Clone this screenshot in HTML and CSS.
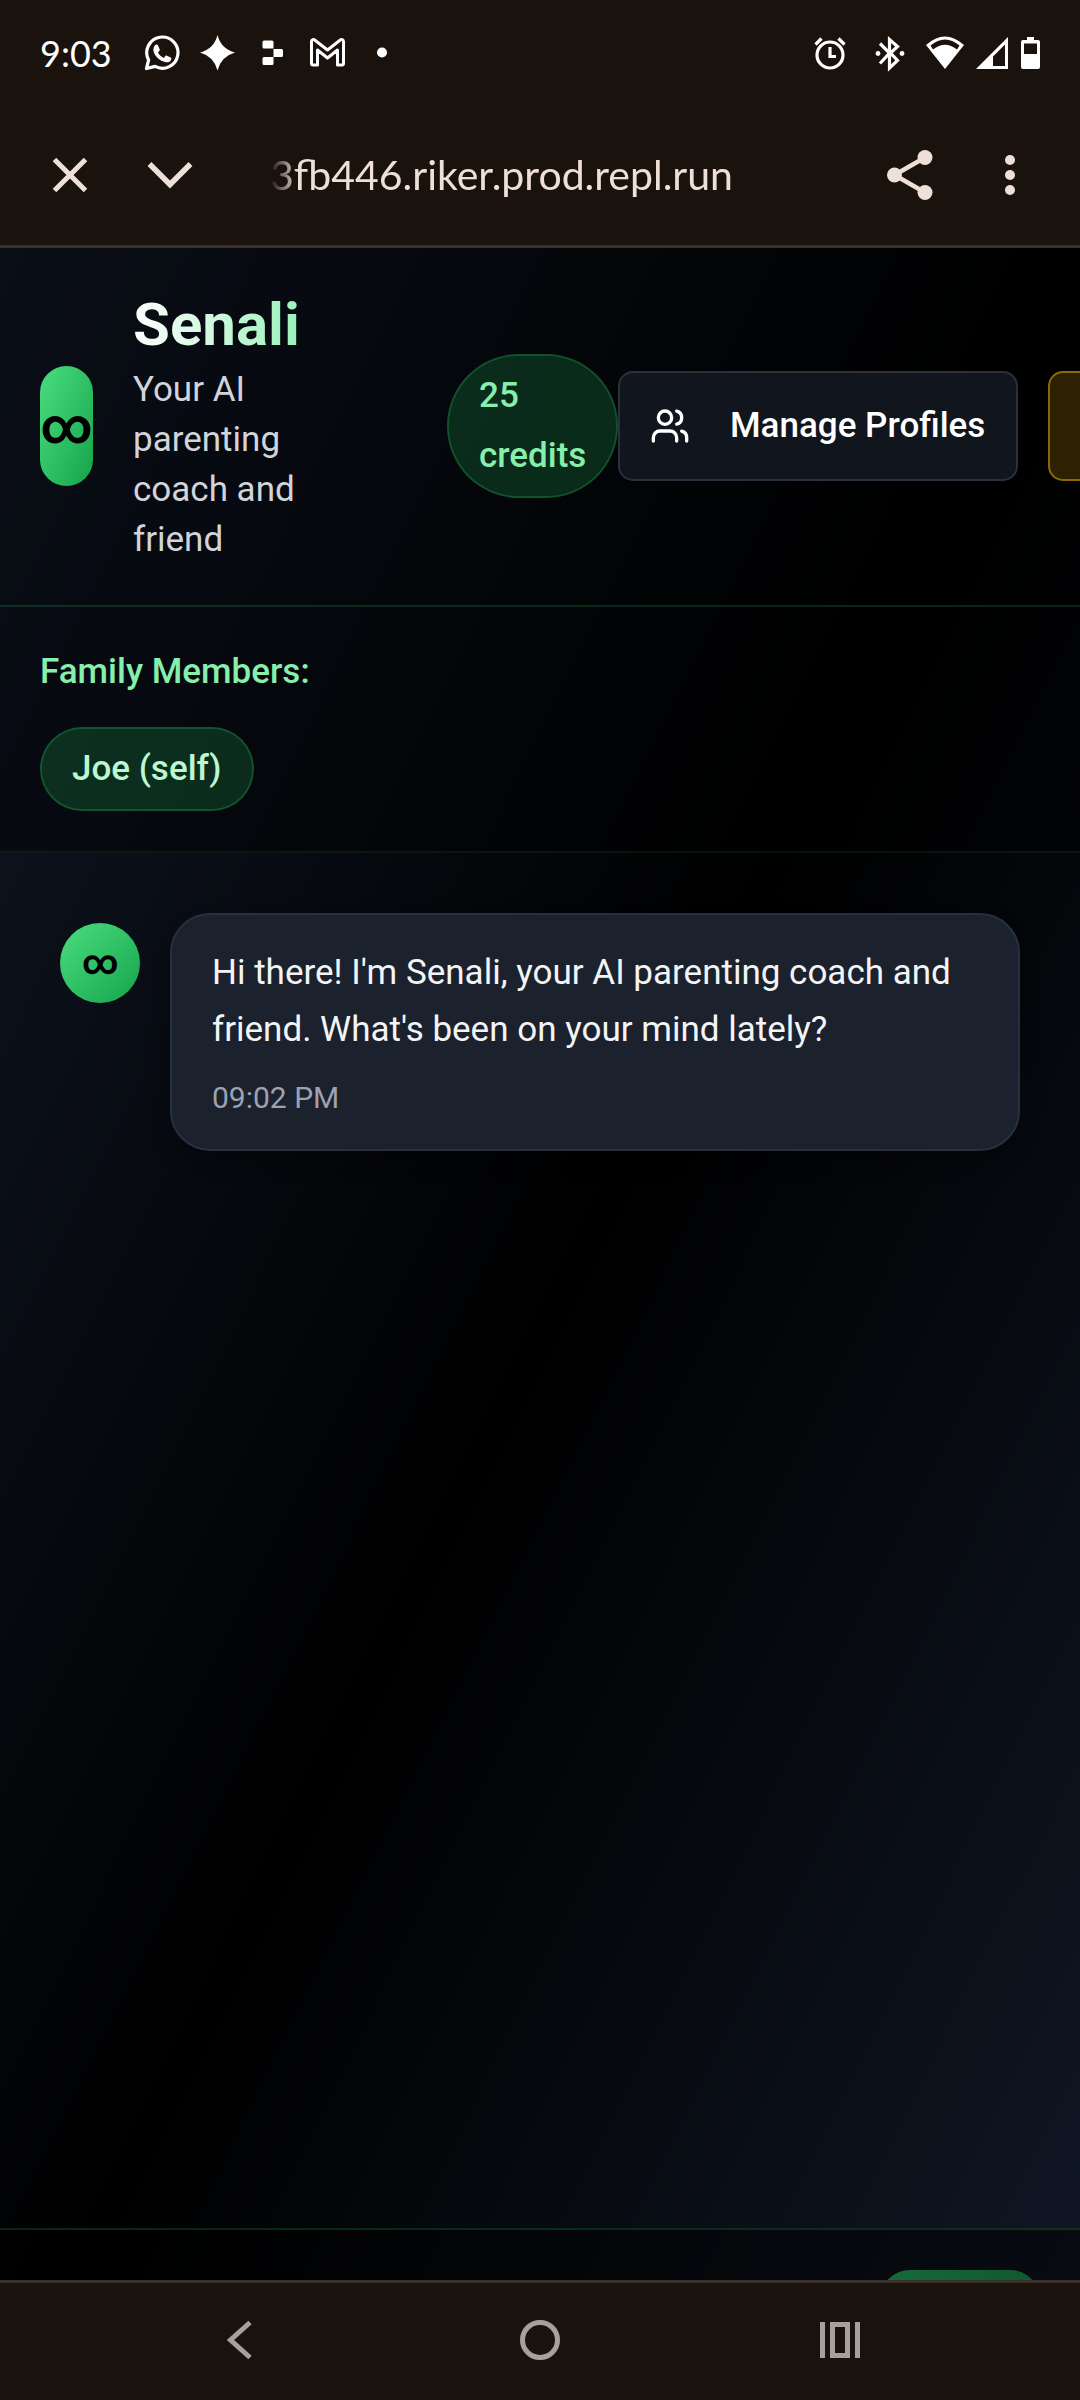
FILE: index.html
```html
<!DOCTYPE html>
<html lang="en">
<head>
<meta charset="utf-8">
<meta name="viewport" content="width=device-width, initial-scale=1">
<title>Senali</title>
<link rel="stylesheet" href="styles.css">
</head>
<body>
<div class="screen">
  <div class="status-bar">
    <div class="status-left">
      <span class="clock">9:03</span>
      <div class="notifications">
        <svg class="icon-36" viewBox="0 0 36 36" aria-hidden="true">
          <path d="M2.500 33.500 4.600 25A15.600 15.600 0 1 1 11 31.400Z" fill="none" stroke="#fff" stroke-width="3.200" stroke-linejoin="round"/>
          <path d="M11.600 9.800c.6-.5 1.800-.5 2.200.3l1.900 4.200c.2.600 0 1.200-.4 1.700l-1.300 1.600c1.300 2.400 3.200 4.200 5.800 5.300l1.600-1.900c.4-.5.9-.6 1.500-.3l3.800 1.900c.7.4.7 1 .5 1.800-.7 2.400-3.200 3.300-5.400 2.800-6.400-1.400-10.600-5.500-12.200-10.700-.7-2.600.2-5.200 2-6.700Z" fill="#fff"/>
        </svg>
        <svg class="icon-36" viewBox="0 0 36 36" aria-hidden="true">
          <path d="M18.500 0Q22 14 36 17.500 22 21.500 18.500 35.500 15 21.500 1 17.500 15 14 18.500 0Z" fill="#fff"/>
        </svg>
        <svg class="icon-36" viewBox="0 0 36 36" aria-hidden="true">
          <path d="M10 5.500h8a1.500 1.500 0 0 1 1.500 1.500v6.500H10A1.500 1.500 0 0 1 8.500 12V7A1.500 1.500 0 0 1 10 5.500ZM19.500 14H27.500A1.500 1.500 0 0 1 29 15.500v5a1.500 1.500 0 0 1-1.500 1.500h-8ZM10 22h9.500v6.500A1.500 1.500 0 0 1 18 30h-8a1.500 1.500 0 0 1-1.500-1.500v-5A1.500 1.500 0 0 1 10 22Z" fill="#fff"/>
        </svg>
        <svg class="icon-36" viewBox="0 0 36 36" aria-hidden="true">
          <path d="M2.500 28.500V6.500C2.500 4.500 4.600 4 6 5.200L18.500 15 31 5.200C32.400 4 34.500 4.500 34.500 6.500V28.500Q34.500 30 33 30H28.500V15L18.500 23 8.500 15V30H4Q2.500 30 2.500 28.500Z" fill="none" stroke="#fff" stroke-width="3" stroke-linejoin="round"/>
        </svg>
        <svg class="icon-36" viewBox="0 0 36 36" aria-hidden="true"><circle cx="18" cy="17.500" r="5" fill="#fff"/></svg>
      </div>
    </div>
    <div class="status-right">
      <div class="indicators">
        <svg class="icon-40" viewBox="0 0 40 40" aria-hidden="true">
          <circle cx="20" cy="22" r="13" fill="none" stroke="#fff" stroke-width="3.200"/>
          <path d="M20 14v9.500h6M5.500 11.500l6-6M28.500 5.500l6 6" fill="none" stroke="#fff" stroke-width="3.200"/>
        </svg>
        <svg class="icon-40" viewBox="0 0 40 40" aria-hidden="true">
          <path d="M10 10.500 19.500 20 10 30.500M19.500 20V6.500L27.500 13.500 20.500 20 27.500 27.500 19.500 35V20" fill="none" stroke="#fff" stroke-width="3.200"/>
          <circle cx="8" cy="20.500" r="2.400" fill="#fff"/><circle cx="32" cy="20.500" r="2.400" fill="#fff"/>
        </svg>
      </div>
      <div class="levels">
        <svg class="icon-wifi" viewBox="0 0 38 34" aria-hidden="true">
          <path d="M0 9Q19-8 38 9L19 33Z" fill="#fff"/>
          <path d="M4.500 9.500Q19-2.500 33.500 9.500L31 13.500Q19 4 7 13.500Z" fill="#1a120d"/>
        </svg>
        <svg class="icon-signal" viewBox="0 0 32 34" aria-hidden="true">
          <path fill-rule="evenodd" d="M32 1V33H0ZM29 8.500 17 20.500V30H29Z" fill="#fff"/>
        </svg>
        <svg class="icon-battery" viewBox="0 0 20 34" aria-hidden="true">
          <path fill-rule="evenodd" d="M7 1h7v3h4q2 0 2 2v25q0 2-2 2H3q-2 0-2-2V6q0-2 2-2h4ZM4 7.500V18H17V7.500Z" fill="#fff"/>
        </svg>
      </div>
    </div>
  </div>

  <div class="toolbar">
    <button class="tool" type="button" aria-label="Close tab">
      <svg class="icon-50" viewBox="0 0 50 50"><path d="M9.500 9.500l31 31M40.500 9.500l-31 31" fill="none" stroke="#eee0d6" stroke-width="5"/></svg>
    </button>
    <button class="tool" type="button" aria-label="Minimize">
      <svg class="icon-50" viewBox="0 0 50 50"><path d="M4.500 14 25 34.500 45.500 14" fill="none" stroke="#eee0d6" stroke-width="5.500"/></svg>
    </button>
    <div class="address">3fb446.riker.prod.repl.run</div>
    <button class="tool" type="button" aria-label="Share">
      <svg class="icon-50" viewBox="0 0 50 50"><path d="M40 7.500 9.500 25 40 42.500" fill="none" stroke="#eee0d6" stroke-width="4.500"/><g fill="#eee0d6"><circle cx="40" cy="7.500" r="7.500"/><circle cx="9.500" cy="25" r="7.500"/><circle cx="40" cy="42.500" r="7.500"/></g></svg>
    </button>
    <button class="tool" type="button" aria-label="More options">
      <svg class="icon-50" viewBox="0 0 50 50"><g fill="#eee0d6"><circle cx="25" cy="10" r="5"/><circle cx="25" cy="25" r="5"/><circle cx="25" cy="40" r="5"/></g></svg>
    </button>
  </div>

  <div class="viewport">
    <div class="app">
      <header class="app-header">
        <div class="brand">
          <div class="logo">∞</div>
          <div class="brand-text">
            <h1 class="brand-name">Senali</h1>
            <p class="tagline">Your AI parenting coach and friend</p>
          </div>
        </div>
        <div class="actions">
          <div class="credits">25 credits</div>
          <button class="profiles" type="button">
            <svg class="icon-40" viewBox="0 0 24 24" fill="none" stroke="currentColor" stroke-width="2" stroke-linecap="round" stroke-linejoin="round" aria-hidden="true">
              <path d="M16 21v-2a4 4 0 0 0-4-4H6a4 4 0 0 0-4 4v2"/><circle cx="9" cy="7" r="4"/><path d="M22 21v-2a4 4 0 0 0-3-3.870"/><path d="M16 3.130a4 4 0 0 1 0 7.750"/>
            </svg>
            Manage Profiles
          </button>
          <button class="upgrade" type="button" aria-label="Upgrade"></button>
        </div>
      </header>

      <section class="family">
        <h2 class="family-title">Family Members:</h2>
        <div class="chips"><span class="chip">Joe (self)</span></div>
      </section>

      <main class="messages">
        <article class="message">
          <div class="avatar">∞</div>
          <div class="bubble">
            <p class="bubble-text">Hi there! I'm Senali, your AI parenting coach and friend. What's been on your mind lately?</p>
            <time class="bubble-time">09:02 PM</time>
          </div>
        </article>
      </main>

      <footer class="composer">
        <button class="send" type="button" aria-label="Send"></button>
      </footer>
    </div>
  </div>

  <nav class="system-nav" aria-label="System">
    <button class="nav-button" type="button" aria-label="Back">
      <svg class="icon-40" viewBox="0 0 40 40"><path d="M30 2.500 10.500 20 30 37.500" fill="none" stroke="#a6a19e" stroke-width="5"/></svg>
    </button>
    <button class="nav-button" type="button" aria-label="Home">
      <svg class="icon-40" viewBox="0 0 40 40"><circle cx="20" cy="20" r="17.500" fill="none" stroke="#a6a19e" stroke-width="5"/></svg>
    </button>
    <button class="nav-button" type="button" aria-label="Recents">
      <svg class="icon-40" viewBox="0 0 40 40"><path d="M2.500 2v36M37.500 2v36M12.500 4.500h15v31h-15Z" fill="none" stroke="#a6a19e" stroke-width="5"/></svg>
    </button>
  </nav>
</div>
</body>
</html>
```
FILE: styles.css
```css
* { box-sizing: border-box; }

body {
  margin: 0;
  background: #1a120d;
  color: #fff;
  font-family: Roboto, "Liberation Sans", sans-serif;
  font-size: 35px;
  line-height: 50px;
}

h1, h2, p { margin: 0; }

button {
  margin: 0;
  padding: 0;
  border: 0;
  background: none;
  color: inherit;
  font: inherit;
}

svg { display: block; flex: none; }

.icon-36 { width: 36px; height: 36px; }
.icon-40 { width: 40px; height: 40px; }
.icon-50 { width: 50px; height: 50px; }
.icon-wifi { width: 38px; height: 34px; }
.icon-signal { width: 32px; height: 34px; }
.icon-battery { width: 20px; height: 34px; }

.screen {
  display: flex;
  flex-direction: column;
  height: 100vh;
  overflow: hidden;
}

/* Status bar */
.status-bar {
  flex: none;
  display: flex;
  align-items: center;
  justify-content: space-between;
  height: 105px;
  padding: 0 40px;
}
.status-left { display: flex; align-items: center; gap: 32px; }
.clock { font-family: Lato, sans-serif; font-size: 36px; }
.notifications { display: flex; gap: 19px; }
.status-right { display: flex; align-items: center; gap: 16px; }
.indicators { display: flex; gap: 20px; }
.levels { display: flex; gap: 12px; }

/* Browser toolbar */
.toolbar {
  flex: none;
  display: flex;
  align-items: center;
  height: 143px;
  padding: 0 20px;
  border-bottom: 3px solid #3b312c;
}
.tool {
  flex: none;
  display: flex;
  align-items: center;
  justify-content: center;
  width: 100px;
  height: 100px;
}
.address {
  flex: 1;
  margin-left: 50px;
  overflow: hidden;
  color: #eee0d6;
  font-family: Lato, sans-serif;
  font-size: 41px;
  white-space: nowrap;
  -webkit-mask-image: linear-gradient(90deg, transparent, #000 28px);
  mask-image: linear-gradient(90deg, transparent, #000 28px);
}

/* Web page */
.viewport {
  flex: 1;
  min-height: 0;
  overflow: hidden;
}
.app {
  display: flex;
  flex-direction: column;
  height: calc(100% + 150px);
  background: linear-gradient(to bottom right, #111827, #000, #111827);
}

.app-header {
  display: flex;
  align-items: center;
  padding: 38px 40px 40px;
  border-bottom: 2px solid rgba(34, 197, 94, .2);
  background: rgba(0, 0, 0, .4);
}
.brand {
  flex: none;
  display: flex;
  align-items: center;
  gap: 40px;
  width: 407px;
}
.logo, .avatar {
  flex: none;
  display: flex;
  align-items: center;
  justify-content: center;
  border-radius: 60px;
  background: linear-gradient(to bottom right, #4ade80, #16a34a);
  color: #000;
  font-weight: 700;
}
.logo { width: 53px; height: 120px; font-size: 50px; }
.brand-text { width: 200px; }
.brand-name {
  margin-bottom: 2px;
  background: linear-gradient(to right, #fff, #86efac);
  -webkit-background-clip: text;
  background-clip: text;
  color: transparent;
  font-size: 60px;
  font-weight: 700;
  line-height: 77px;
}
.tagline { color: #d1d5db; }

.actions { flex: none; display: flex; align-items: center; }
.credits {
  width: 171px;
  padding: 10px 30px;
  border: 2px solid rgba(34, 197, 94, .4);
  border-radius: 72px;
  background: rgba(34, 197, 94, .2);
  background-clip: padding-box;
  color: #86efac;
  font-weight: 500;
  line-height: 60px;
}
.profiles {
  display: flex;
  align-items: center;
  gap: 40px;
  height: 110px;
  padding: 0 31px 0 30px;
  border: 2px solid #2b303c;
  border-radius: 15px;
  background: #11151e;
  color: #fff;
  font-weight: 500;
  white-space: nowrap;
}
.upgrade {
  width: 300px;
  height: 110px;
  margin-left: 30px;
  border: 2px solid #8c6806;
  border-radius: 15px;
  background: #2d2102;
}

.family {
  display: flex;
  flex-direction: column;
  gap: 30px;
  padding: 40px;
  border-bottom: 2px solid rgba(34, 197, 94, .1);
  background: rgba(0, 0, 0, .4);
}
.family-title {
  color: #86efac;
  font-size: 35px;
  font-weight: 500;
}
.chips { display: flex; }
.chip {
  padding: 15px 30px;
  border: 2px solid rgba(34, 197, 94, .4);
  border-radius: 42px;
  background: rgba(34, 197, 94, .2);
  background-clip: padding-box;
  color: #bbf7d0;
  font-weight: 500;
}

.messages { flex: 1; padding: 60px; }
.message { display: flex; align-items: flex-start; gap: 30px; }
.avatar { width: 80px; height: 80px; margin-top: 10px; }
.bubble {
  flex: 1;
  padding: 29px 40px 31px;
  border: 2px solid #273040;
  border-radius: 40px;
  background: #1b212d;
  box-shadow: 0 10px 20px rgba(0, 0, 0, .3);
}
.bubble-text { color: #f3f4f6; line-height: 57px; }
.bubble-time {
  display: block;
  margin-top: 20px;
  color: #9ca3af;
  font-size: 30px;
  line-height: 40px;
}

.composer {
  display: flex;
  justify-content: flex-end;
  padding: 40px;
  border-top: 2px solid rgba(34, 197, 94, .2);
  background: rgba(0, 0, 0, .5);
}
.send {
  width: 160px;
  height: 120px;
  border-radius: 30px;
  background: linear-gradient(to right, #166b39, #0f582f);
}

/* System navigation */
.system-nav {
  flex: none;
  display: grid;
  grid-template-columns: repeat(3, 1fr);
  align-items: center;
  height: 120px;
  padding: 0 90px 3px;
  border-top: 3px solid #3b312c;
  background: #1a120d;
}
.nav-button { display: flex; justify-content: center; }
```
